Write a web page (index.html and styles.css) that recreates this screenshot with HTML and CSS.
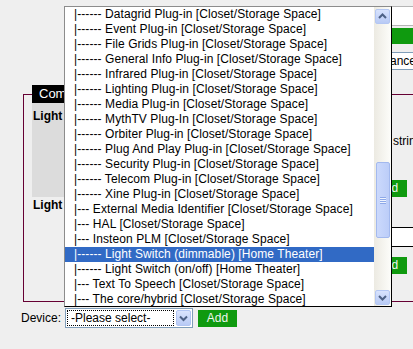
FILE: index.html
```html
<!DOCTYPE html>
<html>
<head>
<meta charset="utf-8">
<title>Devices</title>
<link rel="stylesheet" href="styles.css">
</head>
<body>
<div class="page">
  <div class="top">
    <div class="top-field"></div>
    <div class="top-bar"></div>
    <div class="top-select">Maintenance</div>
  </div>

  <fieldset class="box">
    <legend>Command Groups</legend>
    <div class="row row1">
      <div class="label">Light</div>
      <div class="mid"></div>
      <div class="right">
        <span class="hint">string</span>
        <button class="btn">Add</button>
      </div>
    </div>
    <div class="row row2">
      <div class="label">Light</div>
      <div class="mid"></div>
      <div class="right">
        <div class="textbox"></div>
        <button class="btn">Add</button>
      </div>
    </div>
  </fieldset>

  <div class="device">
    <span class="device-label">Device:</span>
    <div class="select">
      <span class="focus">-Please select-</span>
      <span class="arrow">
        <svg width="13" height="14" viewBox="0 0 13 14"><polyline points="3,5.5 6.5,9 10,5.5" fill="none" stroke="#4d6185" stroke-width="2"/></svg>
      </span>
    </div>
    <button class="btn">Add</button>
  </div>

  <div class="droplist">
    <div class="options">
      <div class="opt">|------ Datagrid Plug-in [Closet/Storage Space]</div>
      <div class="opt">|------ Event Plug-in [Closet/Storage Space]</div>
      <div class="opt">|------ File Grids Plug-in [Closet/Storage Space]</div>
      <div class="opt">|------ General Info Plug-in [Closet/Storage Space]</div>
      <div class="opt">|------ Infrared Plug-in [Closet/Storage Space]</div>
      <div class="opt">|------ Lighting Plug-in [Closet/Storage Space]</div>
      <div class="opt">|------ Media Plug-in [Closet/Storage Space]</div>
      <div class="opt">|------ MythTV Plug-In [Closet/Storage Space]</div>
      <div class="opt">|------ Orbiter Plug-in [Closet/Storage Space]</div>
      <div class="opt">|------ Plug And Play Plug-in [Closet/Storage Space]</div>
      <div class="opt">|------ Security Plug-in [Closet/Storage Space]</div>
      <div class="opt">|------ Telecom Plug-in [Closet/Storage Space]</div>
      <div class="opt">|------ Xine Plug-in [Closet/Storage Space]</div>
      <div class="opt">|--- External Media Identifier [Closet/Storage Space]</div>
      <div class="opt">|--- HAL [Closet/Storage Space]</div>
      <div class="opt">|--- Insteon PLM [Closet/Storage Space]</div>
      <div class="opt sel">|------ Light Switch (dimmable) [Home Theater]</div>
      <div class="opt">|------ Light Switch (on/off) [Home Theater]</div>
      <div class="opt">|--- Text To Speech [Closet/Storage Space]</div>
      <div class="opt">|--- The core/hybrid [Closet/Storage Space]</div>
    </div>
    <div class="scroll">
      <div class="sbtn up">
        <svg width="13" height="13" viewBox="0 0 13 13"><polyline points="3,8 6.5,4.5 10,8" fill="none" stroke="#4d6185" stroke-width="2"/></svg>
      </div>
      <div class="thumb"><span class="grip"></span></div>
      <div class="sbtn down">
        <svg width="13" height="13" viewBox="0 0 13 13"><polyline points="3,5 6.5,8.5 10,5" fill="none" stroke="#4d6185" stroke-width="2"/></svg>
      </div>
    </div>
  </div>
</div>
</body>
</html>
```
FILE: styles.css
```css
* { box-sizing: border-box; }
html, body { margin: 0; padding: 0; }
body {
  background: #efefef;
  font-family: "Liberation Sans", Arial, sans-serif;
  font-size: 12px;
  color: #000;
}
.page {
  position: relative;
  width: 413px;
  height: 349px;
  overflow: hidden;
}

/* top form area (mostly hidden behind the open list) */
.top {
  height: 85px;
  padding-left: 330px;
  display: flex;
  flex-direction: column;
  align-items: flex-start;
}
.top-field {
  margin-top: 6px;
  width: 120px;
  height: 20px;
  background: #fff;
  border: 1px solid #b5b5b5;
}
.top-bar {
  margin-top: 2px;
  width: 120px;
  height: 16px;
  background: #0f9a0f;
}
.top-select {
  margin-top: 8px;
  width: 100px;
  height: 18px;
  background: #fff;
  border: 1px solid #7f9db9;
  text-align: right;
  padding-right: 13px;
  line-height: 16px;
  white-space: nowrap;
}

/* command group box */
.box {
  margin: 0 0 0 23px;
  padding: 0 8px;
  border: 1px solid #660033;
  width: 420px;
  min-width: 0;
}
.box legend {
  background: #000;
  color: #fff;
  font-size: 13px;
  height: 18px;
  line-height: 18px;
  padding: 0 7px;
  margin: 0;
}
.row {
  display: grid;
  grid-template-columns: 100px 236px 1fr;
}
.row1 { height: 93px; }
.row2 { height: 105px; }
.label {
  font-weight: bold;
  line-height: 15px;
  padding: 6px 0 0 1px;
}
.row1 .label { background: #dcdcdc; }
.row2 .label { padding-top: 2px; }
.right {
  display: flex;
  flex-direction: column;
  align-items: flex-start;
}
.hint {
  margin: 31px 0 0 25px;
  line-height: 15px;
}
.btn {
  width: 39px;
  height: 17px;
  padding: 0;
  border: 0;
  background: #0f9a0f;
  color: #eef5ee;
  font: 12px "Liberation Sans", Arial, sans-serif;
  line-height: 17px;
  text-align: center;
}
.row1 .btn { margin-top: 31px; }
.textbox {
  margin-top: 31px;
  width: 100px;
  height: 20px;
  background: #fff;
  border: 1px solid #000;
}
.row2 .btn { margin-top: 10px; }

/* bottom device chooser */
.device {
  display: flex;
  align-items: center;
  margin-top: 6px;
  padding-left: 21px;
  height: 20px;
}
.device-label { margin-right: 4px; }
.select {
  width: 128px;
  height: 20px;
  border: 1px solid #7f9db9;
  background: #fff;
  display: flex;
  align-items: center;
  padding: 1px;
}
.select .focus {
  flex: 1;
  height: 16px;
  border: 1px dotted #000;
  line-height: 14px;
  padding-left: 3px;
  white-space: nowrap;
  overflow: hidden;
}
.select .arrow {
  width: 15px;
  height: 16px;
  margin-left: 2px;
  display: flex;
  align-items: center;
  justify-content: center;
  background: linear-gradient(#dae4fd, #b8caf5);
  border: 1px solid #b1c5f3;
  border-radius: 2px;
}
.device .btn { margin-left: 5px; }

/* open dropdown list */
.droplist {
  position: absolute;
  left: 64px;
  top: 6px;
  width: 328px;
  height: 301px;
  background: #fff;
  border: 1px solid #000;
  border-color: #8c8c8c #000 #000 #8c8c8c;
  display: flex;
}
.options {
  flex: 1;
  overflow: hidden;
}
.opt {
  height: 15px;
  line-height: 15px;
  padding-left: 9px;
  white-space: nowrap;
  letter-spacing: 0.08px;
}
.opt.sel {
  background: #316ac5;
  color: #fff;
}
.scroll {
  width: 17px;
  display: flex;
  flex-direction: column;
  background: linear-gradient(to right, #eceae2, #fdfdfa);
}
.sbtn {
  width: 15px;
  height: 15px;
  margin: 2px 1px 0 1px;
  display: flex;
  align-items: center;
  justify-content: center;
  background: linear-gradient(#d8e3fd, #b8caf5);
  border: 1px solid #b4c7f3;
  border-radius: 2px;
}
.sbtn.down {
  margin: auto 1px 1px 1px;
}
.thumb {
  width: 14px;
  height: 76px;
  margin: 138px 1px 0 2px;
  display: flex;
  align-items: center;
  justify-content: center;
  background: linear-gradient(to right, #cbd9fc, #bccdf8);
  border: 1px solid #a3b9ee;
  border-radius: 2px;
}
.grip {
  width: 6px;
  height: 7px;
  background: repeating-linear-gradient(to bottom, #8ea9e8 0 1px, #eef3fe 1px 2px);
}
```
